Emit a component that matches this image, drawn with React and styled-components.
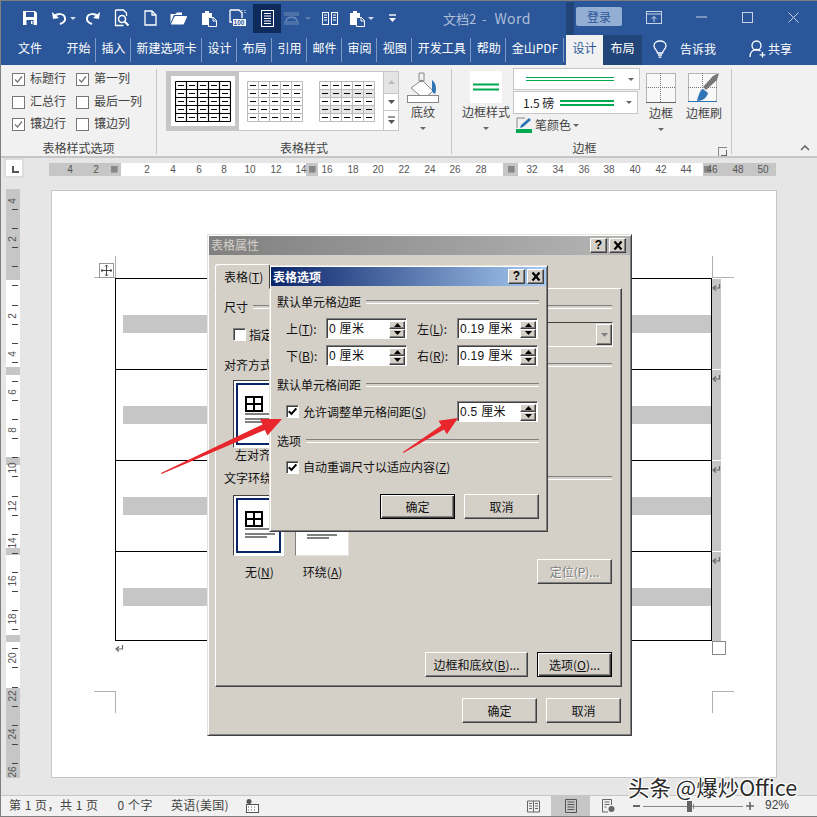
import React from 'react';
import styled, { createGlobalStyle, css } from 'styled-components';

const Global = createGlobalStyle`
  html, body { margin: 0; padding: 0; background: #fff; }
  body { font-family: "Noto Sans CJK SC", "Liberation Sans", sans-serif; font-size: 12px; }
  * { box-sizing: border-box; }
`;

const CJK = `"Noto Sans CJK SC", "Liberation Sans", sans-serif`;

const Frame = styled.div`
  position: relative; width: 817px; height: 817px; overflow: hidden;
  display: flex; flex-direction: column; background: #e6e6e6;
  border-top: 1px solid #7f7f7f; border-left: 1px solid #7f7f7f;
  font-family: ${CJK}; font-size: 12px; line-height: 14px;
`;

/* title bar */
const TitleBar = styled.div`
  height: 34px; background: #2b579a; display: flex; align-items: center; flex: none; position: relative; padding-left: 15px;
`;
const QSlot = styled.div`
  width: ${p => p.$w}px; margin-left: ${p => p.$ml || 0}px; height: 29px; display: flex; align-items: center; justify-content: center; flex: none;
  background: ${p => p.$sel ? '#0f2b5b' : 'transparent'};
`;
const DocTitle = styled.div`
  position: absolute; left: 442px; top: 8px; color: #aebfd9; font-size: 13px; line-height: 18px; white-space: pre;
`;
const DocWord = styled.span`
  font-size: 14px; letter-spacing: .4px; margin-left: 2px;
`;
const DarkStrip = styled.div`
  position: absolute; left: 565px; top: 1px; width: 8px; height: 33px; background: #224579;
`;
const LoginBtn = styled.div`
  position: absolute; left: 575px; top: 6px; width: 46px; height: 19px; border-radius: 2px; background: #93aed3; color: #2b579a;
  font-size: 12px; line-height: 19px; text-align: center;
`;
const WinBtn = styled.div`
  position: absolute; left: ${p => p.$x}px; top: 7px; width: 16px; height: 18px; display: flex; align-items: center; justify-content: center;
`;

/* tabs */
const TabBar = styled.div`
  height: 30px; background: #2b579a; display: flex; flex: none; position: relative; padding-left: 17px;
`;
const FileTab = styled.div`
  color: #fff; width: 43px; line-height: 26px; font-size: 12px; flex: none;
`;
const RTab = styled.div`
  height: 30px; line-height: 26px; color: #fff; font-size: 12px; padding: 0 5.5px; position: relative; white-space: nowrap; flex: none;
  ${p => p.$sep && css`
    &::after { content: ""; position: absolute; right: 0; top: 3px; height: 24px; width: 1px; background: #7f9ac2; }
  `}
`;
const DesignTab = styled.div`
  position: absolute; left: 565px; top: 0; width: 37px; height: 30px; background: #f1f1f1; color: #2b579a; text-align: center; line-height: 26px;
`;
const LayoutTab = styled.div`
  position: absolute; left: 602px; top: 0; width: 39px; height: 30px; background: #224579; color: #fff; text-align: center; line-height: 26px;
`;
const TabExtra = styled.div`
  position: absolute; left: ${p => p.$x}px; top: 0; height: 28px; display: flex; align-items: center; color: #fff; gap: 1px;
`;

/* ribbon */
const Ribbon = styled.div`
  height: 93px; background: #f1f1f1; border-bottom: 2px solid #c6c6c6; display: flex; flex: none; position: relative; color: #444;
`;
const Group = styled.div`
  width: ${p => p.$w}px; flex: none; margin-top: 4px; height: 85px; position: relative; display: flex; flex-direction: column;
  border-right: ${p => p.$noSep ? 'none' : '1px solid #c6c6c6'};
`;
const GroupBody = styled.div`
  flex: 1; display: flex; align-items: flex-start; min-height: 0;
`;
const GroupLabel = styled.div`
  height: 16px; line-height: 14px; margin-bottom: -3px; text-align: center; color: #444; padding-right: ${p => p.$pr || 0}px;
`;
const CheckGrid = styled.div`
  display: grid; grid-template-columns: 64px 64px; grid-auto-rows: 22.5px; padding: 4px 0 0 11px;
`;
const CheckItem = styled.div`
  display: flex; align-items: flex-start; gap: 5px; color: #444; line-height: 10px; white-space: nowrap;
`;
const RibbonBox = styled.div`
  width: 13px; height: 13px; background: #fff; border: 1px solid #777; display: flex; align-items: center; justify-content: center; flex: none;
`;
const Gallery = styled.div`
  margin: 2px 0 0 9px; width: 233px; height: 60px; background: #fff; border: 1px solid #c6c6c6; display: flex; position: relative;
`;
const GalleryItem = styled.div`
  width: 72px; height: 58px; display: flex; align-items: center; justify-content: center; flex: none;
  ${p => p.$sel && css`border: 4px solid #c6c6c6;`}
`;
const GalleryScroll = styled.div`
  position: absolute; right: 0; top: 0; bottom: 0; width: 15px; border-left: 1px solid #c6c6c6; display: flex; flex-direction: column;
`;
const ScrollBtn = styled.div`
  flex: ${p => p.$f}; border-bottom: ${p => p.$last ? 'none' : '1px solid #c6c6c6'}; background: ${p => p.$dim ? '#e4e4e4' : '#fff'};
  display: flex; align-items: center; justify-content: center;
`;
const BigBtn = styled.div`
  width: ${p => p.$w}px; margin-left: ${p => p.$ml || 0}px; display: flex; flex-direction: column; align-items: center; flex: none; padding-top: ${p => p.$pt ?? 2}px;
`;
const BigIcon = styled.div`
  height: 32px; display: flex; align-items: center; justify-content: center;
`;
const BigLabel = styled.div`
  margin-top: 2px; line-height: 14px; white-space: nowrap;
`;
const Caret = styled.span`
  display: block; width: 0; height: 0; border-left: 3.5px solid transparent; border-right: 3.5px solid transparent; border-top: 3.5px solid ${p => p.$c || '#666'};
`;
const BigCaret = styled(Caret)`margin-top: 8px;`;
const PenColumn = styled.div`
  width: 127px; margin: -1px 0 0 1px; display: flex; flex-direction: column; flex: none;
`;
const Drop = styled.div`
  height: ${p => p.$h}px; width: ${p => p.$w}px; margin-top: ${p => p.$mt || 0}px; background: #fff; border: 1px solid #c6c6c6; display: flex; align-items: center; position: relative; padding-left: ${p => p.$pl}px; gap: 6px; color: #222;
`;
const DropCaret = styled(Caret)`position: absolute; right: ${p => p.$r}px; top: 9px;`;
const DoubleLine = styled.div`
  width: ${p => p.$w}px; height: ${p => p.$h}px; border-top: ${p => p.$t}px solid #00a84f; border-bottom: ${p => p.$t}px solid #00a84f;
`;
const PenRow = styled.div`
  display: flex; align-items: center; gap: 2px; margin-top: 2px; padding-left: 3px; height: 18px;
`;
const Launcher = styled.div`
  position: absolute; right: 4px; bottom: -2px; width: 9px; height: 9px; border-left: 1px solid #888; border-top: 1px solid #888;
  &::after { content: ""; position: absolute; right: 0; bottom: 0; width: 5px; height: 5px; border-right: 1px solid #666; border-bottom: 1px solid #666; }
`;
const Collapse = styled.div`
  position: absolute; right: 6px; bottom: 3px; line-height: 0;
`;

/* ruler */
const Workspace = styled.div`
  flex: 1; display: flex; flex-direction: column; background: #e6e6e6; min-height: 0;
`;
const RulerRow = styled.div`
  height: 32px; display: flex; flex: none; position: relative; padding-top: 5px;
`;
const Corner = styled.div`
  position: absolute; left: 3px; top: 0; width: 20px; height: 20px; background: #dcdcdc; padding: 2px;
`;
const CornerInner = styled.div`
  width: 100%; height: 100%; background: #fff; position: relative;
  &::after { content: ""; position: absolute; left: 6px; top: 6px; width: 5px; height: 5px; border-left: 2px solid #555; border-bottom: 2px solid #555; }
`;
const HRuler = styled.div`
  margin-left: 48px; width: 727px; height: 13px; position: relative; display: flex; color: #555; font-size: 10px; line-height: 13px; font-family: "Liberation Sans", sans-serif;
`;
const HSeg = styled.div`
  width: ${p => p.$s}px; height: 13px; background: ${p => p.$gray ? '#c6c6c6' : '#fff'}; flex: none;
`;
const VSeg = styled.div`
  height: ${p => p.$s}px; width: 14px; background: ${p => p.$gray ? '#c6c6c6' : '#fff'}; flex: none;
`;
const HNum = styled.span`
  position: absolute; top: 0; width: 16px; margin-left: -8px; text-align: center;
`;
const RulerGrid = styled.svg`
  position: absolute; top: 3px; width: 7px; height: 7px; margin-left: -3.5px;
`;
const Body = styled.div`
  flex: 1; display: flex; align-items: flex-start; padding-left: 5px; min-height: 0;
`;
const VRuler = styled.div`
  position: relative; width: 14px; height: 589px; margin-top: -1px; display: flex; flex-direction: column; flex: none; overflow: hidden;
`;
const VNum = styled.span`
  position: absolute; left: 0; width: 14px; height: 14px; margin-top: -7px; text-align: center; color: #555; font-size: 10px; line-height: 14px;
  font-family: "Liberation Sans", sans-serif; transform: rotate(-90deg);
`;
const VTick = styled.i`
  position: absolute; left: 6px; width: 6px; height: 1px; background: #444;
`;
const Page = styled.div`
  position: relative; width: 726px; height: 588px; margin-left: 31px; background: #fff; border: 1px solid #c6c6c6; padding: 87px 0 0 63px; flex: none;
`;

/* table */
const DocTable = styled.div`
  width: 606px;
`;
const DocRow = styled.div`
  height: ${p => p.$h}px; display: flex;
`;
const DocCell = styled.div`
  width: 597px; border: 1px solid #000; border-bottom: ${p => p.$last ? '1px solid #000' : 'none'}; padding: 36px 0 0 7px; flex: none;
`;
const CellBar = styled.div`
  height: 18px; background: #c6c6c6;
`;
const EndCell = styled.div`
  width: 9px; background: #c6c6c6; border-top: 1px solid #fff; padding: 5px 0 0 0; line-height: 0;
`;
const ParaMark = styled.div`
  margin-top: 4px; line-height: 0;
`;
const CropV = styled.i`
  position: absolute; left: ${p => p.$x}px; top: ${p => p.$y}px; width: 1px; height: 22px; background: #b0b0b0;
`;
const CropH = styled.i`
  position: absolute; left: ${p => p.$x}px; top: ${p => p.$y}px; width: 22px; height: 1px; background: #b0b0b0;
`;
const MoveHandle = styled.div`
  position: absolute; left: 47px; top: 72px; width: 15px; height: 15px; background: #fff; border: 1px solid #999; display: flex; align-items: center; justify-content: center;
`;
const ResizeHandle = styled.div`
  position: absolute; left: 660px; top: 450px; width: 14px; height: 14px; background: #fff; border: 1px solid #888;
`;

/* status bar */
const Status = styled.div`
  height: 22px; flex: none; background: #f1f1f1; border-top: 1px solid #c6c6c6; border-bottom: 1px solid #7f7f7f; display: flex; align-items: center; position: relative; color: #444; font-size: 12px; padding: 0 0 2px 8px;
`;
const StatusText = styled.span`
  white-space: pre; margin-left: ${p => p.$ml || 0}px; flex: none; letter-spacing: ${p => p.$ls || 0}px;
`;
const StatusIconCell = styled.div`
  position: absolute; left: ${p => p.$x}px; top: 0; bottom: 0; width: ${p => p.$w}px; display: flex; align-items: center; justify-content: center; background: ${p => p.$sel ? '#c6c6c6' : 'transparent'};
`;
const Slider = styled.div`
  position: absolute; left: 642px; top: 10px; width: 100px; height: 1px; background: #888;
`;
const SliderThumb = styled.div`
  position: absolute; left: 44px; top: -5px; width: 5px; height: 11px; background: #666;
`;
const SliderMid = styled.div`
  position: absolute; left: 50px; top: -2px; width: 1px; height: 5px; background: #888;
`;
const Zoom = styled.div`
  position: absolute; left: 764px; top: 2px; font-family: "Liberation Sans", sans-serif; color: #444; font-size: 12px;
`;
const Watermark = styled.div`
  position: absolute; left: 627px; top: 772px; color: #2a2a2a; font-size: 21.5px; line-height: 28px; font-weight: 400; white-space: pre;
  text-shadow: 1px 0 0 #fff, -1px 0 0 #fff, 0 1px 0 #fff, 0 -1px 0 #fff, 1px 1px 0 #fff, -1px -1px 0 #fff, 1px -1px 0 #fff, -1px 1px 0 #fff;
`;

/* classic dialogs */
const raised = css`
  background: #d4d0c8; border: 1px solid; border-color: #fff #404040 #404040 #fff; box-shadow: inset -1px -1px 0 #808080;
`;
const DialogShell = styled.div`
  position: absolute; background: #d4d0c8; border: 1px solid; border-color: #e6e3dc #404040 #404040 #e6e3dc;
  box-shadow: inset 1px 1px 0 #fff, inset -1px -1px 0 #808080; padding: 1px; display: flex; flex-direction: column; color: #111;
`;
const MainDialog = styled(DialogShell)`
  left: 206px; top: 233px; width: 425px; height: 502px;
`;
const InnerDialog = styled(DialogShell)`
  left: 268px; top: 264px; width: 279px; height: 267px;
`;
const DTitle = styled.div`
  height: 19px; flex: none; display: flex; align-items: center; padding: 0 0 ${p => p.$pb || 0}px 2px; gap: 2px; font-size: 12px;
  background: linear-gradient(90deg, ${p => p.$from}, ${p => p.$to}); color: ${p => p.$color}; font-weight: ${p => p.$bold ? 700 : 400};
`;
const DTitleText = styled.span`
  flex: 1;
`;
const TitleBtn = styled.div`
  ${raised}; width: 17px; height: 15px; margin-right: ${p => p.$mr || 0}px; display: flex; align-items: center; justify-content: center; font-family: "Liberation Sans", sans-serif; font-weight: 700; font-size: 12px; color: #000; line-height: 13px;
`;
const DialogTabHead = styled.div`
  height: 34px; flex: none; padding: 9px 0 0 6px; display: flex;
`;
const DialogTab = styled.div`
  width: 55px; height: 25px; background: #d4d0c8; border: 1px solid; border-color: #fff #404040 #d4d0c8 #fff; border-radius: 3px 3px 0 0; padding: 5px 0 0 8px; white-space: nowrap; position: relative; z-index: 1;
`;
const Panel = styled.div`
  margin: -1px 8px 0 6px; height: 399px; border: 1px solid; border-color: #fff #404040 #404040 #fff; box-shadow: inset -1px -1px 0 #808080; padding: 11px 9px 9px 8px; display: flex; flex-direction: column; flex: none;
`;
const Heading = styled.div`
  display: flex; align-items: center; gap: 5px; height: 14px; margin-top: ${p => p.$mt || 0}px; white-space: nowrap; flex: none;
  &::after { content: ""; flex: 1; height: 2px; border-top: 1px solid #808080; border-bottom: 1px solid #fff; }
`;
const ClassicBox = styled.div`
  width: 13px; height: 13px; flex: none; background: #fff; border: 1px solid; border-color: #808080 #fff #fff #808080; box-shadow: inset 1px 1px 0 #404040; display: flex; align-items: center; justify-content: center;
`;
const SizeRow = styled.div`
  height: 25px; margin-top: 8px; display: flex; align-items: center; flex: none; padding-left: 9px; gap: 3px; white-space: nowrap;
`;
const Combo = styled.div`
  margin-left: auto; width: 82px; height: 25px; margin-right: -1px; background: #d4d0c8; border: 1px solid; border-color: #404040 #fff #fff #404040; display: flex; justify-content: flex-end; align-items: center;
`;
const ComboBtn = styled.div`
  ${raised}; width: 16px; height: 21px; display: flex; align-items: center; justify-content: center;
`;
const WrapRow = styled.div`
  display: flex; margin-top: ${p => p.$mt}px; flex: none; padding-left: 9px; gap: 11px;
`;
const LayoutThumb = styled.div`
  width: ${p => p.$w}px; height: ${p => p.$h}px; background: #fff; border: 1px solid; border-color: ${p => p.$sel ? '#404040 #fff #fff #404040' : '#808080 #e6e3dc #e6e3dc #808080'}; padding: 2px; flex: none;
`;
const ThumbInner = styled.div`
  width: 100%; height: 100%; ${p => p.$sel && 'border: 2px solid #0a246a;'} padding: ${p => p.$sel ? '11px 0 0 7px' : '30px 0 0 9px'}; display: flex; flex-direction: column; align-items: flex-start;
`;
const GreyLines = styled.div`
  display: flex; flex-direction: column; margin-top: 1px;
`;
const GreyLine = styled.i`
  display: block; width: ${p => p.$w}px; height: 2px; margin-bottom: ${p => p.$mb}px; background: #808080;
`;
const CaptionRow = styled.div`
  height: 25px; margin-top: 3px; display: flex; align-items: center; flex: none; white-space: nowrap; padding-left: 21px;
`;
const Cap = styled.span`
  margin-right: ${p => p.$mr || 0}px;
`;
const MiniLabel = styled.div`
  height: 14px; padding-left: 11px; white-space: nowrap; flex: none;
`;
const Btn = styled.div`
  ${raised}; width: ${p => p.$w || 75}px; height: 25px; flex: none; display: flex; align-items: center; justify-content: center; white-space: nowrap;
  color: ${p => p.$disabled ? '#808080' : '#111'};
  ${p => p.$def && css`border-color: #000; box-shadow: inset 1px 1px 0 #fff, inset -1px -1px 0 #404040, inset -2px -2px 0 #808080;`}
  ${p => p.$disabled && 'text-shadow: 1px 1px 0 #fff;'}
`;
const PushedBtn = styled(Btn)`margin-left: auto;`;
const BtnRow = styled.div`
  display: flex; justify-content: flex-end; gap: ${p => p.$gap ?? 9}px; margin-top: ${p => p.$mt || 0}px; padding-right: ${p => p.$pr || 0}px; flex: none;
`;
const PanelFoot = styled(BtnRow)`
  margin-top: auto;
`;
const InnerBody = styled.div`
  padding: 9px 7px 0 6px; display: flex; flex-direction: column; flex: 1;
`;
const SpinRow = styled.div`
  display: grid; grid-template-columns: 40px 81px 10px 40px 81px; height: 21px; margin-top: ${p => p.$mt}px; padding-left: 9px; align-items: center; white-space: nowrap; flex: none;
`;
const SpinLabel = styled.span`
  white-space: nowrap;
`;
const Spin = styled.div`
  width: 81px; height: 21px; background: #fff; border: 1px solid; border-color: #808080 #fff #fff #808080; box-shadow: inset 1px 1px 0 #404040; display: flex; align-items: center; padding: 2px 1px 1px 2px; font-size: 12px; color: #111; white-space: pre;
`;
const SpinText = styled.span`
  flex: 1; font-family: "Liberation Sans", ${CJK}; letter-spacing: .3px;
`;
const SpinBtns = styled.div`
  width: 16px; height: 17px; display: flex; flex-direction: column; flex: none;
`;
const SpinBtn = styled.div`
  ${raised}; flex: 1; display: flex; align-items: center; justify-content: center; min-height: 0;
`;
const CheckLine = styled.div`
  display: flex; align-items: center; gap: 4px; height: 14px; margin-top: ${p => p.$mt}px; padding-left: 9px; white-space: nowrap; flex: none;
`;
const AllowRow = styled.div`
  display: flex; align-items: center; height: 21px; margin-top: 9px; padding-left: 9px; gap: 4px; white-space: nowrap; flex: none;
`;
const AllowSpin = styled(Spin)`margin-left: auto; margin-right: 1px;`;
const Mn = styled.span`text-decoration: underline; text-underline-offset: 1px;`;
const Overlay = styled.svg`
  position: absolute; left: 0; top: 0; width: 817px; height: 817px; pointer-events: none;
`;

/* drawings */
const W = { fill: 'none', stroke: '#fff', strokeWidth: 1.3 };
const IconSave = () => <svg width="16" height="16" viewBox="0 0 16 16"><path d="M1 1h12l2 2v12H1z" fill="#fff"/><rect x="4" y="2" width="8" height="5" fill="#2b579a"/><rect x="4.5" y="10" width="7" height="5" fill="#2b579a"/><rect x="9" y="11" width="1.5" height="3" fill="#fff"/></svg>;
const IconUndo = () => <svg width="16" height="14" viewBox="0 0 16 14"><path d="M3 6c3-4 10-4 11 1 .6 3-2 5-5 6" fill="none" stroke="#fff" strokeWidth="2"/><path d="M1 1l1 7 6-1z" fill="#fff"/></svg>;
const IconRedo = () => <svg width="16" height="14" viewBox="0 0 16 14"><path d="M13 6c-3-4-10-4-11 1-.6 3 2 5 5 6" fill="none" stroke="#fff" strokeWidth="2"/><path d="M15 1l-1 7-6-1z" fill="#fff"/></svg>;
const IconPreview = () => <svg width="16" height="18" viewBox="0 0 16 18"><path d="M1.5 1h8l3 3v3M1.5 1v15.5h8" {...W}/><circle cx="8" cy="10" r="3.5" fill="none" stroke="#fff" strokeWidth="1.6"/><path d="M10.5 12.5l4 4" stroke="#fff" strokeWidth="2.2"/></svg>;
const IconNew = () => <svg width="13" height="16" viewBox="0 0 13 16"><path d="M1 1h7l4 4v10H1zM8 1v4h4" {...W}/></svg>;
const IconOpen = () => <svg width="18" height="14" viewBox="0 0 18 14"><path d="M0.5 13V3h5l1.5-1.5h5V4H4L.5 13h13L17 5H5" fill="#fff"/><path d="M4 6h13l-3.5 7.5H1z" fill="#fff"/><path d="M0.5 13L4 5.2" stroke="#2b579a"/></svg>;
const IconPaste = () => <svg width="16" height="17" viewBox="0 0 16 17"><path d="M1 3h3V1h4v2h3v4H7v8H1z" fill="#fff"/><path d="M7.5 7.5h5l3 3v6h-8z" fill="#2b579a" stroke="#fff"/><path d="M12 7.5v3.5h3.5" fill="none" stroke="#fff"/></svg>;
const Icon100 = () => <svg width="18" height="18" viewBox="0 0 18 18"><path d="M1 1h9l3 3v5M1 1v12h2" {...W}/><path d="M13 1v4M16 1v4" stroke="#fff" strokeDasharray="1 1"/><rect x="4" y="10" width="13" height="7" fill="#fff"/><text x="4.6" y="16" fontSize="6.5" fontFamily="Liberation Sans" fontWeight="700" fill="#2b579a">100</text></svg>;
const IconDocLines = () => <svg width="13" height="17" viewBox="0 0 13 17"><rect x=".5" y=".5" width="12" height="16" fill="none" stroke="#fff"/><path d="M3 3.5h7M3 6h7M3 8.5h7M3 11h7M3 13.5h7" stroke="#fff"/></svg>;
const IconDim = () => <svg width="15" height="13" viewBox="0 0 15 13"><path d="M0 1h15M0 3h15M0 10h15M0 12h15" stroke="#6f8cb9"/><path d="M2 9c1-5 10-5 11 0" fill="none" stroke="#6f8cb9" strokeWidth="1.4"/></svg>;
const IconCols = () => <svg width="16" height="13" viewBox="0 0 16 13"><rect x=".5" y=".5" width="6" height="12" {...W} strokeWidth="1"/><rect x="9.5" y=".5" width="6" height="12" {...W} strokeWidth="1"/><path d="M2 3h3M2 5.5h3M2 8h3M11 3h3M11 5.5h3M11 8h3" stroke="#fff"/></svg>;
const IconCustom = () => <svg width="9" height="9" viewBox="0 0 9 9"><path d="M1 1h7" stroke="#fff" strokeWidth="1.4"/><path d="M1 4h7L4.5 8z" fill="#fff"/></svg>;
const IconCustomDark = () => <svg width="9" height="9" viewBox="0 0 9 9"><path d="M1 1h7" stroke="#555" strokeWidth="1.2"/><path d="M1 4h7L4.5 8z" fill="#555"/></svg>;
const WhiteCaret = () => <Caret $c="#d0dcee" />;
const DimCaret = () => <Caret $c="#5f7eb0" />;

const IconBulb = () => <svg width="14" height="19" viewBox="0 0 14 19"><path d="M4.5 13c0-2.500-3.500-4-3.500-7.200C1 2.800 3.700 1 7 1s6 1.800 6 4.800C13 9 9.500 10.500 9.500 13z" {...W}/><path d="M5 15h4M5.500 17.200h3" stroke="#fff" strokeWidth="1.3"/></svg>;
const IconShare = () => <svg width="18" height="18" viewBox="0 0 18 18"><circle cx="7.500" cy="5.500" r="4.500" {...W}/><path d="M1 17c0-5 3-7.500 6.500-7.500 1.500 0 3 .5 4 1.500" {...W}/><path d="M13.500 12v5.500M10.700 14.800h5.600" stroke="#fff" strokeWidth="1.3"/></svg>;

const TableThumb = ({ c = '#000', band = false, sw = 1 }) => {
  const xs = [0, 1, 2, 3, 4], w = 11, h = 8;
  return (
    <svg width="56" height="41" viewBox="0 0 56 41">
      {band && [1, 3].map(r => <rect key={r} x="0" y={r * h} width="56" height={h} fill="#e6e6e6" />)}
      {[0, 1, 2, 3, 4, 5].map(i => <path key={`v${i}`} d={`M${0.5 + i * w} .5V40.500`} stroke={c} strokeWidth={sw} />)}
      {[0, 1, 2, 3, 4, 5].map(i => <path key={`h${i}`} d={`M.5 ${0.5 + i * h}H55.500`} stroke={c} strokeWidth={sw} />)}
      {xs.map(r => xs.map(k => <path key={`${r}${k}`} d={`M${3 + k * w} ${4.5 + r * h}h6`} stroke="#000" />))}
    </svg>
  );
};

const IconBucket = () => <svg width="32" height="32" viewBox="0 0 32 32"><path d="M15 9l11 11-9 8-13-11z" fill="#fff" stroke="#888"/><path d="M12 2h5v8h-5z" fill="none" stroke="#888"/><circle cx="14.5" cy="10" r="1.3" fill="#888"/><path d="M25 9c4 3 5 9 3 14-1-1-2-1-3-3z" fill="#2f75b5"/><rect x=".5" y="24.5" width="31" height="7" fill="#fff" stroke="#888"/></svg>;
const IconBorderStyle = () => <svg width="32" height="32" viewBox="0 0 32 32"><rect width="32" height="32" fill="#fff"/><path d="M3 13.500h26M3 18.500h26" stroke="#00a84f" strokeWidth="2"/></svg>;
const IconBorders = () => <svg width="30" height="30" viewBox="0 0 30 30"><rect x=".5" y=".5" width="29" height="29" fill="#f8f8f8" stroke="#777" strokeDasharray="1 1"/><path d="M14.500 0v30M0 14.500h30" stroke="#777" strokeDasharray="1 1"/><path d="M0 29.500h30" stroke="#666"/></svg>;
const IconBrush = () => <svg width="32" height="32" viewBox="0 0 32 32"><rect x=".5" y="1.500" width="28" height="28" fill="#f8f8f8" stroke="#777" strokeDasharray="1 1"/><path d="M14.500 1v29M0 15.500h29" stroke="#777" strokeDasharray="1 1"/><path d="M0 29.500h29" stroke="#2f75b5"/><path d="M18 18L29 8l2-7-6 3-10 11z" fill="#777"/><path d="M15 17c-3 1-4 5-6 12 5 0 10-3 11-8z" fill="#2f75b5"/></svg>;
const IconPen = () => <svg width="17" height="16" viewBox="0 0 17 16"><path d="M1 11V1h8" fill="none" stroke="#888"/><path d="M4 11l1-3 8-7 2 2-8 7z" fill="#2f75b5"/><rect y="12" width="16" height="4" fill="#00a84f"/></svg>;
const TinyCheck = ({ c = '#777' }) => <svg width="9" height="9" viewBox="0 0 9 9"><path d="M1 4.500l2.500 2.500L8 1.500" fill="none" stroke={c} strokeWidth="1.3"/></svg>;
const BlackCheck = () => <svg width="9" height="9" viewBox="0 0 9 9"><path d="M.8 4.200l2.700 2.700L8.300 1.500" fill="none" stroke="#000" strokeWidth="2"/></svg>;
const Cross = () => <svg width="10" height="9" viewBox="0 0 10 9"><path d="M1.500 .5l7 8M8.500 .5l-7 8" stroke="#000" strokeWidth="2.2"/></svg>;
const TriUp = ({ c = '#000' }) => <svg width="7" height="4" viewBox="0 0 7 4"><path d="M3.500 0L7 4H0z" fill={c}/></svg>;
const TriDown = ({ c = '#000' }) => <svg width="7" height="4" viewBox="0 0 7 4"><path d="M0 0h7L3.500 4z" fill={c}/></svg>;
const GridMini = () => <svg width="18" height="16" viewBox="0 0 18 16"><rect x="1" y="1" width="16" height="14" fill="#fff" stroke="#000" strokeWidth="2"/><path d="M9 1v14M1 8h16" stroke="#000" strokeWidth="2"/></svg>;
const GridMark = () => <path d="M0 1h7M0 3h7M0 5h7M1 0v7M3 0v7M5 0v7" stroke="#666" strokeWidth=".8" />;
const Return = () => <svg width="9" height="8" viewBox="0 0 9 8"><path d="M7.500 0v4H2M4 1.500L1 4l3 2.500" fill="none" stroke="#666" strokeWidth="1.2"/></svg>;
const MoveIcon = () => <svg width="11" height="11" viewBox="0 0 11 11"><path d="M5.500 0v11M0 5.500h11M4 1.500L5.500 0 7 1.500M4 9.500L5.500 11 7 9.500M1.500 4L0 5.500 1.500 7M9.500 4L11 5.500 9.500 7" fill="none" stroke="#444"/></svg>;

const ThumbLines = () => (
  <GreyLines>
    <GreyLine $w={30} $mb={3} />
    <GreyLine $w={30} $mb={1} />
    <GreyLine $w={22} $mb={0} />
  </GreyLines>
);

const Spinner = ({ value, as: Comp = Spin }) => (
  <Comp>
    <SpinText>{value}</SpinText>
    <SpinBtns>
      <SpinBtn><TriUp /></SpinBtn>
      <SpinBtn><TriDown /></SpinBtn>
    </SpinBtns>
  </Comp>
);

const quick = [
  { n: <IconSave />, w: 28 },
  { n: <IconUndo />, w: 20, ml: 5 },
  { n: <WhiteCaret />, w: 7 },
  { n: <IconRedo />, w: 20, ml: 7 },
  { n: <IconPreview />, w: 20, ml: 9 },
  { n: <IconNew />, w: 20, ml: 8 },
  { n: <IconOpen />, w: 20, ml: 9 },
  { n: <IconPaste />, w: 20, ml: 10 },
  { n: <Icon100 />, w: 20, ml: 9 },
  { n: <IconDocLines />, w: 28, ml: 5, sel: true },
  { n: <IconDim />, w: 20 },
  { n: <DimCaret />, w: 8, ml: 3 },
  { n: <IconCols />, w: 20, ml: 8 },
  { n: <IconPaste />, w: 20, ml: 7 },
  { n: <WhiteCaret />, w: 8 },
  { n: <IconCustom />, w: 16, ml: 9 },
];

const tabs = ['开始', '插入', '新建选项卡', '设计', '布局', '引用', '邮件', '审阅', '视图', '开发工具', '帮助', '金山PDF'];
const hSegs = [[72, 1], [2, 0], [183, 0], [12, 1], [2, 0], [183, 0], [15, 1], [2, 0], [181, 0], [2, 0], [73, 1]];
const hNums = [[70, 4], [96, 2], [147, 2], [173, 4], [199, 6], [224, 8], [250, 10], [276, 12], [301, 14], [327, 16], [353, 18], [378, 20], [404, 22], [430, 24], [455, 26], [481, 28], [532, 32], [558, 34], [584, 36], [609, 38], [635, 40], [661, 42], [686, 44], [712, 46], [738, 48], [763, 50]];
const hGrids = [114, 312, 511, 707];
const vSegs = [[91, 1], [87, 0], [8, 1], [82, 0], [8, 1], [83, 0], [7, 1], [80, 0], [7, 1], [46, 0], [90, 1]];
const vNums = [[201, 4], [239, 2], [316, 2], [354, 4], [392, 6], [430, 8], [468, 10], [506, 12], [543, 14], [581, 16], [619, 18], [658, 20], [696, 22], [734, 24], [772, 26]];
const vTicks = Array.from({ length: 30 }, (_, i) => 210 + 19.1 * i);

export default function App() {
  return (
    <Frame>
      <Global />
      <TitleBar>
        {quick.map((q, i) => <QSlot key={i} $w={q.w} $ml={q.ml} $sel={q.sel}>{q.n}</QSlot>)}
        <DocTitle>{'文档2  -  '}<DocWord>Word</DocWord></DocTitle>
        <DarkStrip />
        <LoginBtn>登录</LoginBtn>
        <WinBtn $x={645}><svg width="16" height="13" viewBox="0 0 16 13"><rect x=".5" y=".5" width="15" height="12" fill="none" stroke="#c7d4e8"/><path d="M.5 3h15M8 11V5.500M5.500 8L8 5.500 10.500 8" fill="none" stroke="#c7d4e8"/></svg></WinBtn>
        <WinBtn $x={692}><svg width="11" height="2" viewBox="0 0 11 2"><path d="M0 1h11" stroke="#c7d4e8"/></svg></WinBtn>
        <WinBtn $x={738}><svg width="11" height="11" viewBox="0 0 11 11"><rect x=".5" y=".5" width="10" height="10" fill="none" stroke="#c7d4e8"/></svg></WinBtn>
        <WinBtn $x={784}><svg width="11" height="11" viewBox="0 0 11 11"><path d="M.5 .5l10 10M10.500 .5l-10 10" stroke="#c7d4e8"/></svg></WinBtn>
      </TitleBar>

      <TabBar>
        <FileTab>文件</FileTab>
        {tabs.map(t => <RTab key={t} $sep>{t}</RTab>)}
        <DesignTab>设计</DesignTab>
        <LayoutTab>布局</LayoutTab>
        <TabExtra $x={652}><IconBulb /></TabExtra>
        <TabExtra $x={679}>告诉我</TabExtra>
        <TabExtra $x={748}><IconShare />共享</TabExtra>
      </TabBar>

      <Ribbon>
        <Group $w={156}>
          <GroupBody>
            <CheckGrid>
              <CheckItem><RibbonBox><TinyCheck /></RibbonBox>标题行</CheckItem>
              <CheckItem><RibbonBox><TinyCheck /></RibbonBox>第一列</CheckItem>
              <CheckItem><RibbonBox />汇总行</CheckItem>
              <CheckItem><RibbonBox />最后一列</CheckItem>
              <CheckItem><RibbonBox><TinyCheck /></RibbonBox>镶边行</CheckItem>
              <CheckItem><RibbonBox />镶边列</CheckItem>
            </CheckGrid>
          </GroupBody>
          <GroupLabel>表格样式选项</GroupLabel>
        </Group>
        <Group $w={295}>
          <GroupBody>
            <Gallery>
              <GalleryItem $sel><TableThumb sw={1.2} /></GalleryItem>
              <GalleryItem><TableThumb c="#bbb" /></GalleryItem>
              <GalleryItem><TableThumb c="#bbb" band /></GalleryItem>
              <GalleryScroll>
                <ScrollBtn $f={22} $dim><TriUp c="#bbb" /></ScrollBtn>
                <ScrollBtn $f={18}><TriDown c="#555" /></ScrollBtn>
                <ScrollBtn $f={20} $last><IconCustomDark /></ScrollBtn>
              </GalleryScroll>
            </Gallery>
            <BigBtn $w={32} $ml={8} $pt={2}>
              <BigIcon><IconBucket /></BigIcon>
              <BigLabel>底纹</BigLabel>
              <BigCaret />
            </BigBtn>
          </GroupBody>
          <GroupLabel>表格样式</GroupLabel>
        </Group>
        <Group $w={280}>
          <GroupBody>
            <BigBtn $w={52} $ml={8} $pt={2}>
              <BigIcon><IconBorderStyle /></BigIcon>
              <BigLabel>边框样式</BigLabel>
              <BigCaret />
            </BigBtn>
            <PenColumn>
              <Drop $h={22} $w={127} $pl={12}>
                <DoubleLine $w={88} $h={4} $t={1} />
                <DropCaret $r={5} />
              </Drop>
              <Drop $h={23} $w={125} $pl={9} $mt={1}>
                <span>1.5 磅</span>
                <DoubleLine $w={54} $h={6} $t={2} />
                <DropCaret $r={5} />
              </Drop>
              <PenRow><IconPen /><span>笔颜色</span><Caret /></PenRow>
            </PenColumn>
            <BigBtn $w={30} $ml={6} $pt={3}>
              <BigIcon><IconBorders /></BigIcon>
              <BigLabel>边框</BigLabel>
              <BigCaret />
            </BigBtn>
            <BigBtn $w={36} $ml={10} $pt={3}>
              <BigIcon><IconBrush /></BigIcon>
              <BigLabel>边框刷</BigLabel>
            </BigBtn>
          </GroupBody>
          <GroupLabel $pr={14}>边框</GroupLabel>
          <Launcher />
        </Group>
        <Group $w={84} $noSep>
          <Collapse><svg width="10" height="6" viewBox="0 0 10 6"><path d="M1 5l4-4 4 4" fill="none" stroke="#666" strokeWidth="1.6"/></svg></Collapse>
        </Group>
      </Ribbon>

      <Workspace>
        <RulerRow>
          <Corner><CornerInner /></Corner>
          <HRuler>
            {hSegs.map(([s, g], i) => <HSeg key={i} $s={s} $gray={g} />)}
            {hNums.map(([x, n]) => <HNum key={x} style={{ left: x - 49 }}>{n}</HNum>)}
            {hGrids.map(x => <RulerGrid key={x} style={{ left: x - 49 }} viewBox="0 0 7 7"><GridMark /></RulerGrid>)}
          </HRuler>
        </RulerRow>
        <Body>
          <VRuler>
            {vSegs.map(([s, g], i) => <VSeg key={i} $s={s} $gray={g} />)}
            {vTicks.map(y => <VTick key={y} style={{ top: y - 190 }} />)}
            {vNums.map(([y, n]) => <VNum key={y} style={{ top: y - 189 }}>{n}</VNum>)}
          </VRuler>
          <Page>
            <CropV $x={63} $y={65} />
            <CropH $x={42} $y={86} />
            <CropV $x={660} $y={65} />
            <CropH $x={660} $y={86} />
            <CropH $x={42} $y={500} />
            <CropV $x={63} $y={500} />
            <CropH $x={660} $y={500} />
            <CropV $x={660} $y={500} />
            <MoveHandle><MoveIcon /></MoveHandle>
            <ResizeHandle />
            <DocTable>
              {[91, 91, 91, 90].map((h, i) => (
                <DocRow key={i} $h={h}>
                  <DocCell $last={i === 3}><CellBar /></DocCell>
                  <EndCell><Return /></EndCell>
                </DocRow>
              ))}
            </DocTable>
            <ParaMark><Return /></ParaMark>
          </Page>
        </Body>
      </Workspace>

      <Status>
        <StatusText $ls={0.5}>第 1 页，共 1 页</StatusText>
        <StatusText $ml={19} $ls={0.5}>0 个字</StatusText>
        <StatusText $ml={18} $ls={0.3}>英语(美国)</StatusText>
        <StatusIconCell $x={243} $w={16}><svg width="13" height="14" viewBox="0 0 13 14"><circle cx="3" cy="2.500" r="2.500" fill="#555"/><rect x=".5" y="5.500" width="12" height="8" fill="#fff" stroke="#555"/><path d="M2 8h1M5 8h1M8 8h1M2 11h1M5 11h1M8 11h1" stroke="#555"/></svg></StatusIconCell>
        <StatusIconCell $x={524} $w={16}><svg width="13" height="13" viewBox="0 0 13 13"><path d="M.5 1h12v11H.5zM6.500 1v11M2 3.500h3M2 6h3M2 8.500h3M8 3.500h3M8 6h3M8 8.500h3" fill="none" stroke="#666"/></svg></StatusIconCell>
        <StatusIconCell $x={550} $w={39} $sel><svg width="12" height="14" viewBox="0 0 12 14"><path d="M.5 .5h11v13H.5zM2.500 3h7M2.500 5.500h7M2.500 8h7M2.500 10.500h7" fill="none" stroke="#555"/></svg></StatusIconCell>
        <StatusIconCell $x={599} $w={16}><svg width="13" height="14" viewBox="0 0 13 14"><path d="M6 13H.5V.5h9V6M2.500 3h5M2.500 5.500h5M2.500 8h2" fill="none" stroke="#666"/><circle cx="9.500" cy="10" r="3" fill="#666"/></svg></StatusIconCell>
        <StatusIconCell $x={629} $w={12}><svg width="7" height="2" viewBox="0 0 7 2"><rect width="7" height="2" fill="#666"/></svg></StatusIconCell>
        <Slider><SliderMid /><SliderThumb /></Slider>
        <StatusIconCell $x={743} $w={12}><svg width="8" height="8" viewBox="0 0 8 8"><path d="M0 4h8M4 0v8" stroke="#666" strokeWidth="1.6"/></svg></StatusIconCell>
        <Zoom>92%</Zoom>
      </Status>

      <MainDialog>
        <DTitle $from="#808080" $to="#b5b5b5" $color="#d4d0c8" $pb={1}>
          <DTitleText>表格属性</DTitleText>
          <TitleBtn>?</TitleBtn>
          <TitleBtn $mr={4}><Cross /></TitleBtn>
        </DTitle>
        <DialogTabHead><DialogTab>表格(<Mn>T</Mn>)</DialogTab></DialogTabHead>
        <Panel>
          <Heading>尺寸</Heading>
          <SizeRow>
            <ClassicBox />
            <span>指定</span>
            <Combo><ComboBtn><TriDown c="#808080" /></ComboBtn></Combo>
          </SizeRow>
          <Heading $mt={11}>对齐方式</Heading>
          <WrapRow $mt={8}>
            <LayoutThumb $w={51} $h={68} $sel>
              <ThumbInner $sel>
                <GridMini />
                <ThumbLines />
              </ThumbInner>
            </LayoutThumb>
          </WrapRow>
          <MiniLabel>左对齐</MiniLabel>
          <Heading $mt={9}>文字环绕</Heading>
          <WrapRow $mt={10}>
            <LayoutThumb $w={51} $h={61} $sel>
              <ThumbInner $sel>
                <GridMini />
                <ThumbLines />
              </ThumbInner>
            </LayoutThumb>
            <LayoutThumb $w={54} $h={61}>
              <ThumbInner>
                <ThumbLines />
              </ThumbInner>
            </LayoutThumb>
          </WrapRow>
          <CaptionRow>
            <Cap $mr={29}>无(<Mn>N</Mn>)</Cap>
            <Cap>环绕(<Mn>A</Mn>)</Cap>
            <PushedBtn $disabled $w={75}>定位(P)...</PushedBtn>
          </CaptionRow>
          <PanelFoot $gap={9}>
            <Btn $w={103}>边框和底纹(<Mn>B</Mn>)...</Btn>
            <Btn $def $w={75}>选项(<Mn>O</Mn>)...</Btn>
          </PanelFoot>
        </Panel>
        <BtnRow $mt={11} $gap={9} $pr={9}>
          <Btn>确定</Btn>
          <Btn>取消</Btn>
        </BtnRow>
      </MainDialog>

      <InnerDialog>
        <DTitle $from="#0a246a" $to="#a6caf0" $color="#fff" $bold>
          <DTitleText>表格选项</DTitleText>
          <TitleBtn>?</TitleBtn>
          <TitleBtn $mr={2}><Cross /></TitleBtn>
        </DTitle>
        <InnerBody>
          <Heading>默认单元格边距</Heading>
          <SpinRow $mt={9}>
            <SpinLabel>上(<Mn>T</Mn>):</SpinLabel><Spinner value="0 厘米" /><i />
            <SpinLabel>左(<Mn>L</Mn>):</SpinLabel><Spinner value="0.19 厘米" />
          </SpinRow>
          <SpinRow $mt={6}>
            <SpinLabel>下(<Mn>B</Mn>):</SpinLabel><Spinner value="0 厘米" /><i />
            <SpinLabel>右(<Mn>R</Mn>):</SpinLabel><Spinner value="0.19 厘米" />
          </SpinRow>
          <Heading $mt={12}>默认单元格间距</Heading>
          <AllowRow>
            <ClassicBox><BlackCheck /></ClassicBox>
            <span>允许调整单元格间距(<Mn>S</Mn>)</span>
            <Spinner value="0.5 厘米" as={AllowSpin} />
          </AllowRow>
          <Heading $mt={12}>选项</Heading>
          <CheckLine $mt={12}>
            <ClassicBox><BlackCheck /></ClassicBox>
            <span>自动重调尺寸以适应内容(<Mn>Z</Mn>)</span>
          </CheckLine>
          <BtnRow $mt={20} $gap={9}>
            <Btn $def>确定</Btn>
            <Btn>取消</Btn>
          </BtnRow>
        </InnerBody>
      </InnerDialog>

      <Overlay viewBox="0 0 817 817">
        <polygon points="160,472 261.500,423.500 259,418 281,418 266.400,434.400 263.900,428.900 160.500,473" fill="#e8262c" />
        <polygon points="402,451 440.400,424.400 437.500,419.700 457,417 445.900,433.300 443,428.600 402.500,452" fill="#e8262c" />
      </Overlay>
      <Watermark>{'头条 @爆炒Office'}</Watermark>
    </Frame>
  );
}
